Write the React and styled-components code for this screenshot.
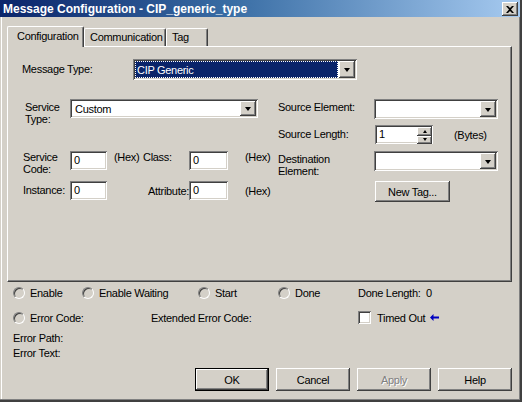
import React from 'react';
import styled, { createGlobalStyle, css } from 'styled-components';

const GlobalStyle = createGlobalStyle`
  html, body {
    margin: 0;
    padding: 0;
    background: #d4d0c8;
  }
  * { box-sizing: border-box; }
`;

// classic 3d borders
const sunken = css`
  box-shadow: inset 1px 1px #808080, inset -1px -1px #ffffff,
    inset 2px 2px #404040, inset -2px -2px #d4d0c8;
`;

const raised = css`
  box-shadow: inset -1px -1px #404040, inset 1px 1px #ffffff,
    inset -2px -2px #808080, inset 2px 2px #d4d0c8;
`;

const Window = styled.div`
  width: 522px;
  height: 402px;
  background: #d4d0c8;
  font-family: "Liberation Sans", Arial, sans-serif;
  font-size: 11px;
  letter-spacing: -0.3px;
  color: #000;
  display: flex;
  flex-direction: column;
  padding: 0 3px 4px 2px;
  box-shadow: inset -1px -1px #404040, inset -2px -2px #404040,
    inset -3px -3px #808080, inset 1px 0 #d4d0c8, inset 2px 0 #ffffff;
  overflow: hidden;
`;

const TitleBar = styled.div`
  height: 17px;
  margin: 0 -1px 0 -2px;
  background: linear-gradient(to right, #0a246a 0%, #3a6ea5 45%, #a6caf0 100%);
  display: flex;
  align-items: center;
  justify-content: space-between;
  padding: 0 2px 0 3px;
`;

const Title = styled.span`
  color: #fff;
  font-weight: bold;
  font-size: 12px;
  letter-spacing: 0;
`;

const CloseButton = styled.div`
  width: 16px;
  height: 14px;
  background: #d4d0c8;
  ${raised};
  display: flex;
  align-items: center;
  justify-content: center;
  margin-top: 1px;
`;

const Body = styled.div`
  flex: 1;
  display: flex;
  flex-direction: column;
  padding: 9px 0 0 5px;
`;

const TabStrip = styled.div`
  display: flex;
  align-items: flex-end;
  height: 20px;
  position: relative;
  z-index: 1;
`;

const Tab = styled.div`
  height: ${({ $active }) => ($active ? '21px' : '18px')};
  padding: ${({ $active }) => ($active ? '3px 0 0 9px' : '2px 0 0 5px')};
  width: ${({ $w }) => $w}px;
  background: #d4d0c8;
  border-top: 1px solid #fff;
  border-left: 1px solid #fff;
  border-right: 1px solid #404040;
  box-shadow: inset -1px 0 #808080;
  border-radius: 2px 2px 0 0;
  margin-bottom: ${({ $active }) => ($active ? '-1px' : '0')};
`;

const Panel = styled.div`
  width: 505px;
  height: 236px;
  border-top: 1px solid #fff;
  border-left: 1px solid #fff;
  border-right: 1px solid #404040;
  border-bottom: 1px solid #404040;
  box-shadow: inset -1px -1px #808080;
  padding: 12px 0 0 14px;
  display: flex;
  flex-direction: column;
`;

const Row = styled.div`
  display: flex;
  align-items: ${({ $align }) => $align || 'center'};
  margin-top: ${({ $mt }) => $mt || 0}px;
`;

const Label = styled.div`
  width: ${({ $w }) => $w}px;
  padding-left: ${({ $pl }) => $pl || 0}px;
  padding-top: ${({ $pt }) => $pt || 0}px;
  line-height: ${({ $lh }) => $lh || 13}px;
  flex-shrink: 0;
  white-space: pre-line;
`;

const Combo = styled.div`
  width: ${({ $w }) => $w}px;
  height: ${({ $h }) => $h}px;
  background: #fff;
  ${sunken};
  padding: 2px;
  display: flex;
  flex-shrink: 0;
`;

const ComboValue = styled.div`
  flex: 1;
  display: flex;
  align-items: center;
  padding-left: 3px;
  margin-right: 1px;
  ${({ $selected }) =>
    $selected &&
    css`
      background: #0a246a;
      color: #fff;
      outline: 1px dotted #fff;
      outline-offset: -1px;
      padding-left: 2px;
    `}
`;

const DropButton = styled.div`
  width: 16px;
  background: #d4d0c8;
  ${raised};
  display: flex;
  align-items: center;
  justify-content: center;
`;

const Arrow = styled.div`
  width: 0;
  height: 0;
  border-left: 3.5px solid transparent;
  border-right: 3.5px solid transparent;
  border-top: 4px solid #000;
  margin-top: 1px;
`;

const Field = styled.div`
  width: ${({ $w }) => $w}px;
  height: 19px;
  background: #fff;
  ${sunken};
  padding: 2px 0 0 4px;
  line-height: 15px;
  flex-shrink: 0;
  display: flex;
`;

const Note = styled.div`
  width: ${({ $w }) => $w || 'auto'}px;
  padding-left: ${({ $pl }) => $pl || 0}px;
  flex-shrink: 0;
`;

const Columns = styled.div`
  display: flex;
  margin-top: 19px;
`;

const Column = styled.div`
  width: ${({ $w }) => $w}px;
  display: flex;
  flex-direction: column;
`;

const Spin = styled.div`
  display: flex;
  flex-direction: column;
  width: 15px;
  margin-left: auto;
  margin-right: 1px;
`;

const SpinHalf = styled.div`
  flex: 1;
  background: #d4d0c8;
  ${raised};
  display: flex;
  align-items: center;
  justify-content: center;
`;

const TinyArrow = styled.div`
  width: 0;
  height: 0;
  border-left: 2.5px solid transparent;
  border-right: 2.5px solid transparent;
  ${({ $up }) => ($up ? 'border-bottom: 3px solid #000;' : 'border-top: 3px solid #000;')}
`;

const Button = styled.div`
  width: ${({ $w }) => $w || 74}px;
  height: ${({ $h }) => $h || 23}px;
  background: #d4d0c8;
  display: flex;
  align-items: center;
  justify-content: center;
  flex-shrink: 0;
  color: ${({ $disabled }) => ($disabled ? '#808080' : '#000')};
  text-shadow: ${({ $disabled }) => ($disabled ? '1px 1px #fff' : 'none')};
  ${({ $default }) =>
    $default
      ? css`
          border: 1px solid #000;
          box-shadow: inset -1px -1px #404040, inset 1px 1px #ffffff,
            inset -2px -2px #808080, inset 2px 2px #d4d0c8;
        `
      : raised};
`;

const Status = styled.div`
  display: flex;
  flex-direction: column;
  padding-left: 6px;
`;

const StatusRow = styled.div`
  display: flex;
  align-items: center;
  height: ${({ $h }) => $h}px;
`;

const Cell = styled.div`
  width: ${({ $w }) => $w}px;
  display: flex;
  align-items: center;
  flex-shrink: 0;
`;

const Radio = styled.div`
  width: 12px;
  height: 12px;
  border-radius: 50%;
  border: 1px solid;
  border-color: #808080 #fff #fff #808080;
  box-shadow: inset 1px 1px #404040, inset -1px -1px #d4d0c8;
  background: #d4d0c8;
  margin-right: 5px;
  flex-shrink: 0;
`;

const Check = styled.div`
  width: 13px;
  height: 13px;
  background: #fff;
  ${sunken};
  margin-right: 6px;
`;

const Plain = styled.div`
  line-height: 15px;
`;

const ButtonBar = styled.div`
  display: flex;
  gap: 7px;
  margin-top: 7px;
  padding-left: 188px;
`;

const Combobox = ({ w, h, value, selected }) => (
  <Combo $w={w} $h={h}>
    <ComboValue $selected={selected}>{value}</ComboValue>
    <DropButton>
      <Arrow />
    </DropButton>
  </Combo>
);

export default function App() {
  return (
    <>
      <GlobalStyle />
      <Window>
        <TitleBar>
          <Title>Message Configuration - CIP_generic_type</Title>
          <CloseButton>
            <svg width="8" height="7" viewBox="0 0 8 7">
              <path d="M0 0h2l2 2 2-2h2L5 3.5 8 7H6L4 5 2 7H0l3-3.5z" fill="#000" />
            </svg>
          </CloseButton>
        </TitleBar>
        <Body>
          <TabStrip>
            <Tab $active $w={77}>Configuration</Tab>
            <Tab $w={82}>Communication</Tab>
            <Tab $w={42}>Tag</Tab>
          </TabStrip>
          <Panel>
            <Row>
              <Label $w={111}>Message Type:</Label>
              <Combobox w={224} h={21} value="CIP Generic" selected />
            </Row>
            <Columns>
              <Column $w={256}>
                <Row $align="flex-start">
                  <Label $w={48} $pl={3} $lh={12} $pt={2}>{'Service\nType:'}</Label>
                  <Combobox w={188} h={19} value="Custom" />
                </Row>
                <Row $align="flex-start" $mt={26}>
                  <Label $w={48} $pl={1} $lh={12}>{'Service\nCode:'}</Label>
                  <Field $w={37}>0</Field>
                  <Note $w={36} $pl={7}>(Hex)</Note>
                  <Note $w={46}>Class:</Note>
                  <Field $w={39}>0</Field>
                  <Note $pl={17}>(Hex)</Note>
                </Row>
                <Row $mt={6}>
                  <Label $w={48} $pl={1}>Instance:</Label>
                  <Field $w={37}>0</Field>
                  <Note $w={36} />
                  <Note $w={46} $pl={5}>Attribute:</Note>
                  <Field $w={39}>0</Field>
                  <Note $pl={17}>(Hex)</Note>
                </Row>
              </Column>
              <Column $w={230}>
                <Row $align="flex-start">
                  <Label $w={96} $pt={2}>Source Element:</Label>
                  <Combobox w={124} h={20} value="" />
                </Row>
                <Row $mt={6}>
                  <Label $w={97}>Source Length:</Label>
                  <Field $w={58}>
                    1
                    <Spin>
                      <SpinHalf>
                        <TinyArrow $up />
                      </SpinHalf>
                      <SpinHalf>
                        <TinyArrow />
                      </SpinHalf>
                    </Spin>
                  </Field>
                  <Note $pl={21}>(Bytes)</Note>
                </Row>
                <Row $align="flex-start" $mt={7}>
                  <Label $w={96} $lh={12} $pt={2}>{'Destination\nElement:'}</Label>
                  <Combobox w={124} h={20} value="" />
                </Row>
                <Row $mt={4}>
                  <Note $w={97} />
                  <Button $w={75} $h={21}>New Tag...</Button>
                </Row>
              </Column>
            </Columns>
          </Panel>
          <Status>
            <StatusRow $h={22}>
              <Cell $w={69}><Radio />Enable</Cell>
              <Cell $w={116}><Radio />Enable Waiting</Cell>
              <Cell $w={80}><Radio />Start</Cell>
              <Cell $w={80}><Radio />Done</Cell>
              <Cell $w={100}>Done Length:&nbsp;&nbsp;0</Cell>
            </StatusRow>
            <StatusRow $h={27}>
              <Cell $w={138}><Radio />Error Code:</Cell>
              <Cell $w={207}>Extended Error Code:</Cell>
              <Cell $w={100}>
                <Check />
                Timed Out
                <svg width="9" height="7" viewBox="0 0 9 7" style={{ marginLeft: 5 }}>
                  <path d="M0 3.5L3.5 0v2.5H9v2H3.5V7z" fill="#0000c0" />
                </svg>
              </Cell>
            </StatusRow>
            <Plain>Error Path:</Plain>
            <Plain>Error Text:</Plain>
          </Status>
          <ButtonBar>
            <Button $default>OK</Button>
            <Button>Cancel</Button>
            <Button $disabled>Apply</Button>
            <Button>Help</Button>
          </ButtonBar>
        </Body>
      </Window>
    </>
  );
}
